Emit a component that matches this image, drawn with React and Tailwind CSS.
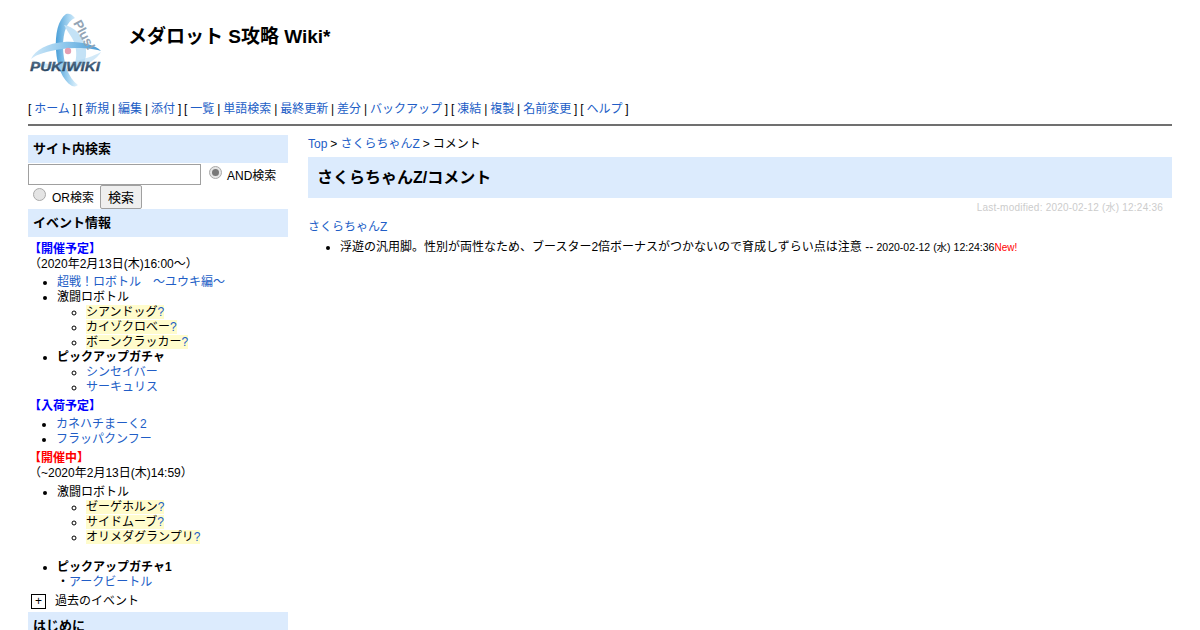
import React from 'react';

const link = 'text-[#215dc6]';

function Logo() {
  return (
    <svg width="76" height="76" viewBox="0 0 76 76" className="block">
      <defs>
        <linearGradient id="swoop" x1="0" y1="0" x2="1" y2="0">
          <stop offset="0" stopColor="#4a9fd8" />
          <stop offset="0.6" stopColor="#a9d6f2" />
          <stop offset="1" stopColor="#e4f3fc" />
        </linearGradient>
        <linearGradient id="ring" x1="0" y1="0" x2="1" y2="0">
          <stop offset="0" stopColor="#cfe8f8" />
          <stop offset="0.5" stopColor="#8cc6ec" />
          <stop offset="1" stopColor="#4b9bd4" />
        </linearGradient>
        <linearGradient id="word" x1="0" y1="0" x2="0" y2="1">
          <stop offset="0" stopColor="#5d7a96" />
          <stop offset="1" stopColor="#1f3a55" />
        </linearGradient>
        <filter id="soft">
          <feGaussianBlur stdDeviation="0.6" />
        </filter>
      </defs>
      <g filter="url(#soft)">
        <path d="M38 2 C30 8 27 22 28 38 C29 54 34 68 44 74 C47 75 49 74 50 73 C40 66 35 50 35 34 C35 20 39 9 47 6 C44 2 41 1 38 2 Z" fill="url(#swoop)" />
        <path d="M36 13 C48 15 60 28 58 44 C56 56 48 60 42 58 C50 52 50 36 44 26 C41 21 38 17 36 13 Z" fill="#c4e2f6" />
        <path d="M3 47 C7 38 20 31 36 30 C52 29 68 33 73 39 C64 36 48 35 34 37 C20 39 9 42 3 47 Z" fill="url(#ring)" />
        <path d="M4 48 C14 53 30 53 44 50 C56 47 66 44 73 40 C68 49 52 57 34 58 C18 58 8 54 4 48 Z" fill="#b4daf3" opacity="0.6" />
        <circle cx="40" cy="39" r="3.2" fill="#e49fb2" />
      </g>
      <text x="2" y="59" fontFamily="Liberation Sans, sans-serif" fontSize="13.5" fontWeight="700" fontStyle="italic" fill="url(#word)" stroke="#2d4a68" strokeWidth="0.3" textLength="70" lengthAdjust="spacingAndGlyphs">PUKIWIKI</text>
      <text x="45" y="11" fontFamily="Liberation Sans, sans-serif" fontSize="13" fontWeight="700" fill="#93a4b5" transform="rotate(62 45 11)">Plus!</text>
    </svg>
  );
}

function Radio({ checked }) {
  return (
    <span className="inline-flex w-[13px] h-[13px] rounded-full border border-[#a9a9a9] bg-[#e4e4e4] items-center justify-center">
      {checked && <span className="w-[7px] h-[7px] rounded-full bg-[#777]" />}
    </span>
  );
}

function SideHeading({ children }) {
  return <h4 className="bg-[#dcebfd] h-[28px] pl-[5px] font-bold text-[13px] leading-[28px] text-black">{children}</h4>;
}

function Hl({ children }) {
  return (
    <span className="bg-[#fffccc]">
      {children}
      <span className={link}>?</span>
    </span>
  );
}

export default function App() {
  return (
    <div className="h-[630px] w-[1200px] overflow-hidden bg-white text-black px-[28px] text-[12px] leading-[15px] font-['Liberation_Sans','Noto_Sans_CJK_JP',sans-serif]">
      <header className="flex pt-[12px] h-[101px]">
        <Logo />
        <h1 className="ml-[24px] mt-[12px] text-[19px] leading-[26px] font-bold">メダロット S攻略 Wiki*</h1>
      </header>

      <nav className="h-[17px] leading-[17px] whitespace-nowrap [word-spacing:-0.45px]">
        [ <a className={link}>ホーム</a> ] [ <a className={link}>新規</a> | <a className={link}>編集</a> | <a className={link}>添付</a> ] [ <a className={link}>一覧</a> | <a className={link}>単語検索</a> | <a className={link}>最終更新</a> | <a className={link}>差分</a> | <a className={link}>バックアップ</a> ] [ <a className={link}>凍結</a> | <a className={link}>複製</a> | <a className={link}>名前変更</a> ] [ <a className={link}>ヘルプ</a> ]
      </nav>
      <hr className="mt-[6px] border-0 h-[2px] bg-[#707070]" />

      <div className="flex mt-[9px] gap-[20px]">
        <aside className="w-[260px] shrink-0">
          <SideHeading>サイト内検索</SideHeading>
          <div className="flex items-start h-[22px]">
            <input className="w-[173px] h-[21px] mt-[1px] border border-[#a0a0a0] bg-white" />
            <span className="ml-[8px] mt-[2px]"><Radio checked /></span>
            <span className="ml-[5px] mt-[6px]">AND検索</span>
          </div>
          <div className="flex items-center h-[24px]">
            <span className="ml-[5px] mb-[5px] flex"><Radio /></span>
            <span className="ml-[6px] mt-[2px]">OR検索</span>
            <button className="ml-[6px] w-[42px] h-[24px] border border-[#a0a0a0] bg-[#efefef] text-[13px] rounded-[2px]">検索</button>
          </div>
          <SideHeading>イベント情報</SideHeading>

          <p className="mt-[5px] pl-[1px] font-bold text-[#0000ff]">【開催予定】</p>
          <p className="pl-[1px]">（2020年2月13日(木)16:00～）</p>
          <ul className="list-disc pl-[29px] mt-[3px]">
            <li><a className={link}>超戦！ロボトル　～ユウキ編～</a></li>
            <li>
              激闘ロボトル
              <ul className="list-[circle] pl-[29px]">
                <li><Hl>シアンドッグ</Hl></li>
                <li><Hl>カイゾクロベー</Hl></li>
                <li><Hl>ボーンクラッカー</Hl></li>
              </ul>
            </li>
            <li>
              <b>ピックアップガチャ</b>
              <ul className="list-[circle] pl-[29px]">
                <li><a className={link}>シンセイバー</a></li>
                <li><a className={link}>サーキュリス</a></li>
              </ul>
            </li>
          </ul>

          <p className="mt-[4px] pl-[1px] font-bold text-[#0000ff]">【入荷予定】</p>
          <ul className="list-disc pl-[28px] mt-[3px]">
            <li><a className={link}>カネハチまーく2</a></li>
            <li><a className={link}>フラッパクンフー</a></li>
          </ul>

          <p className="mt-[4px] pl-[1px] font-bold text-[#ff0000]">【開催中】</p>
          <p className="pl-[1px]">（~2020年2月13日(木)14:59）</p>
          <ul className="list-disc pl-[29px] mt-[4px]">
            <li>
              激闘ロボトル
              <ul className="list-[circle] pl-[29px]">
                <li><Hl>ゼーゲホルン</Hl></li>
                <li><Hl>サイドムーブ</Hl></li>
                <li><Hl>オリメダグランプリ</Hl></li>
              </ul>
            </li>
            <li className="mt-[15px]">
              <b>ピックアップガチャ1</b>
              <br />
              ・<a className={link}>アークビートル</a>
            </li>
          </ul>

          <div className="flex items-center h-[16px] mt-[3px]">
            <span className="ml-[3px] w-[15px] h-[15px] border border-black flex items-center justify-center text-[12px] leading-none">+</span>
            <span className="ml-[9px]">過去のイベント</span>
          </div>
          <div className="mt-[3px]">
            <SideHeading>はじめに</SideHeading>
          </div>
        </aside>

        <main className="flex-1 min-w-0">
          <p className="pt-[2px] [word-spacing:-0.33px]"><a className={link}>Top</a> &gt; <a className={link}>さくらちゃんZ</a> &gt; コメント</p>
          <h1 className="mt-[5px] bg-[#dcebfd] h-[41px] pl-[9px] text-[16px] leading-[41px] font-bold">さくらちゃんZ/コメント</h1>
          <p className="mt-[4px] pr-[9px] text-right text-[10px] leading-[12px] tracking-[0.22px] text-[#cccccc]">Last-modified: 2020-02-12 (水) 12:24:36</p>
          <p className="mt-[6px]"><a className={link}>さくらちゃんZ</a></p>
          <ul className="list-disc pl-[32px] mt-[5px]">
            <li>
              浮遊の汎用脚。性別が両性なため、ブースター2倍ボーナスがつかないので育成しずらい点は注意 -- <span className="text-[10.5px]">2020-02-12 (水) 12:24:36</span><span className="text-[10px] text-[#ff0000]">New!</span>
            </li>
          </ul>
        </main>
      </div>
    </div>
  );
}
